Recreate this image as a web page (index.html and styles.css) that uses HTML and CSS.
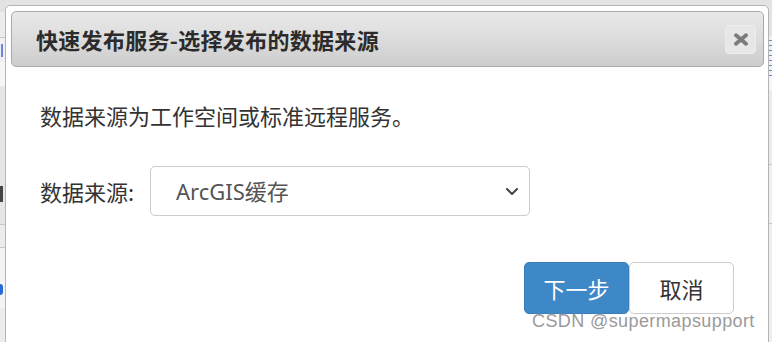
FILE: index.html
```html
<!DOCTYPE html>
<html lang="zh-CN">
<head>
<meta charset="utf-8">
<title>快速发布服务</title>
<link rel="stylesheet" href="styles.css">
</head>
<body>
<div class="page">
  <div class="strip strip-left">
    <div class="band b-top"></div>
    <div class="band b-light"></div>
    <div class="band b-line"></div>
    <div class="band b-link"><span class="frag frag-blue"></span></div>
    <div class="band b-white"></div>
    <div class="band b-gray"><span class="frag frag-dark"></span></div>
    <div class="band b-line"></div>
    <div class="band b-mid"></div>
    <div class="band b-line"></div>
    <div class="band b-white2"><span class="frag frag-blue2"></span></div>
    <div class="band b-rest"></div>
  </div>

  <div class="dialog">
    <div class="dialog-header">
      <h1 class="dialog-title">快速发布服务-选择发布的数据来源</h1>
      <button class="close-btn" aria-label="关闭">
        <svg width="16" height="13" viewBox="0 0 16 13">
          <path d="M3 2.2 L13 10.8 M13 2.2 L3 10.8" stroke="#7c7c7c" stroke-width="3.8" stroke-linecap="round" fill="none"/>
        </svg>
      </button>
    </div>
    <div class="dialog-body">
      <p class="intro">数据来源为工作空间或标准远程服务。</p>
      <div class="form-row">
        <label class="form-label">数据来源:</label>
        <div class="select">
          <span class="select-value">ArcGIS缓存</span>
          <svg class="chevron" width="14" height="9" viewBox="0 0 14 9">
            <path d="M2 2 L7 7 L12 2" stroke="#444" stroke-width="2" fill="none" stroke-linecap="round" stroke-linejoin="round"/>
          </svg>
        </div>
      </div>
      <div class="actions">
        <button class="btn btn-primary">下一步</button>
        <button class="btn btn-default">取消</button>
      </div>
    </div>
    <div class="watermark">CSDN @supermapsupport</div>
  </div>

  <div class="strip strip-right">
    <div class="band r-top"></div>
    <div class="band r-link"></div>
    <div class="band r-white"></div>
    <div class="band r-gray"></div>
    <div class="band b-line"></div>
    <div class="band r-mid"></div>
    <div class="band b-line"></div>
    <div class="band r-rest"></div>
  </div>
</div>
</body>
</html>
```

FILE: styles.css
```css
* { box-sizing: border-box; }

html, body {
  margin: 0;
  padding: 0;
  width: 772px;
  height: 342px;
  overflow: hidden;
  background: #e4e4e4;
  font-family: "Noto Sans CJK SC", "Noto Sans", sans-serif;
}

.page {
  display: flex;
  width: 772px;
  height: 342px;
  overflow: hidden;
}

/* background page slivers */
.strip {
  display: flex;
  flex-direction: column;
  flex: none;
  overflow: hidden;
}
.strip-left { width: 5px; }
.strip-right { width: 3px; }

.band { flex: none; position: relative; overflow: hidden; }
.b-top { height: 12px; background: #e2e2e2; }
.b-light { height: 25px; background: #ececec; }
.b-line { height: 1px; background: #c8c8c8; }
.b-link { height: 24px; background: #eef0f6; }
.b-white { height: 24px; background: #f6f6f6; }
.b-gray { height: 138px; background: #e6e6e6; }
.b-mid { height: 22px; background: #ececec; }
.b-white2 { height: 60px; background: #f4f4f4; }
.b-rest { flex: 1; background: #ececec; }

.frag {
  position: absolute;
  display: block;
}
.frag-blue { background: #6a86d6; left: 1px; top: 6px; width: 2px; height: 13px; }
.frag-dark { background: #444; left: 0; top: 100px; width: 3px; height: 16px; }
.frag-blue2 { background: #2a6ad0; left: 0; top: 36px; width: 3px; height: 11px; border-radius: 0 4px 4px 0; }

.r-top { height: 36px; background: #e4e4e4; }
.r-link { height: 40px; background: repeating-linear-gradient(to bottom, #f0f0f0 0 4px, #6a8ad8 4px 5px); }
.r-white { height: 14px; background: #f6f6f6; }
.r-gray { height: 74px; background: #ebebeb; }
.r-mid { height: 58px; background: #f0f0f0; }
.r-rest { flex: 1; background: #eeeeee; }

/* dialog */
.dialog {
  position: relative;
  flex: none;
  width: 764px;
  height: 350px;
  margin-top: 5px;
  background: #fff;
  border: 1px solid #b4b4b4;
  border-radius: 5px 5px 0 0;
  padding: 5px 4px 0 5px;
}

.dialog-header {
  display: flex;
  align-items: center;
  justify-content: space-between;
  height: 56px;
  border: 1px solid #a9a9a9;
  border-radius: 5px;
  background: linear-gradient(to bottom, #e9e9e9 0%, #dcdcdc 50%, #cdcdcd 100%);
  padding: 0 7px 0 24px;
}

.dialog-title {
  margin: 0;
  font-size: 22px;
  font-weight: bold;
  color: #2b2b2b;
  line-height: 30px;
  letter-spacing: 0.3px;
}

.close-btn {
  display: flex;
  align-items: center;
  justify-content: center;
  width: 31px;
  height: 29px;
  padding: 0;
  margin-top: 1px;
  border: 1px solid #eeeeee;
  border-radius: 4px;
  background: #e7e7e7;
}

.dialog-body {
  padding: 0 29px 0 29px;
}

.intro {
  margin: 32px 0 0 0;
  font-size: 22px;
  line-height: 32px;
  color: #333;
}

.form-row {
  display: flex;
  align-items: center;
  margin-top: 35px;
}

.form-label {
  width: 110px;
  flex: none;
  font-size: 22px;
  line-height: 32px;
  color: #333;
}

.select {
  display: flex;
  align-items: center;
  justify-content: space-between;
  width: 380px;
  height: 50px;
  border: 1px solid #cccccc;
  border-radius: 5px;
  padding: 0 10px 0 25px;
  background: #fff;
}

.select-value {
  font-family: "Noto Sans", "Noto Sans CJK SC", sans-serif;
  font-size: 22px;
  color: #555;
  line-height: 30px;
}

.chevron { margin-top: 1px; }

.actions {
  display: flex;
  justify-content: flex-end;
  margin-top: 46px;
  padding-right: 1px;
}

.btn {
  width: 105px;
  height: 52px;
  font-family: "Noto Sans CJK SC", sans-serif;
  font-size: 22px;
  line-height: 30px;
  border-radius: 5px;
  padding: 0;
}

.btn-primary {
  background: #3f88c8;
  border: 1px solid #3a7fbc;
  color: #fff;
}

.btn-default {
  background: #fff;
  border: 1px solid #cccccc;
  color: #333;
}

.watermark {
  position: absolute;
  left: 526px;
  top: 305px;
  font-family: "Liberation Sans", sans-serif;
  font-size: 18px;
  letter-spacing: 0.4px;
  line-height: 20px;
  color: #9a9a9a;
  text-shadow: 0 0 1px rgba(255,255,255,0.8);
}
```
